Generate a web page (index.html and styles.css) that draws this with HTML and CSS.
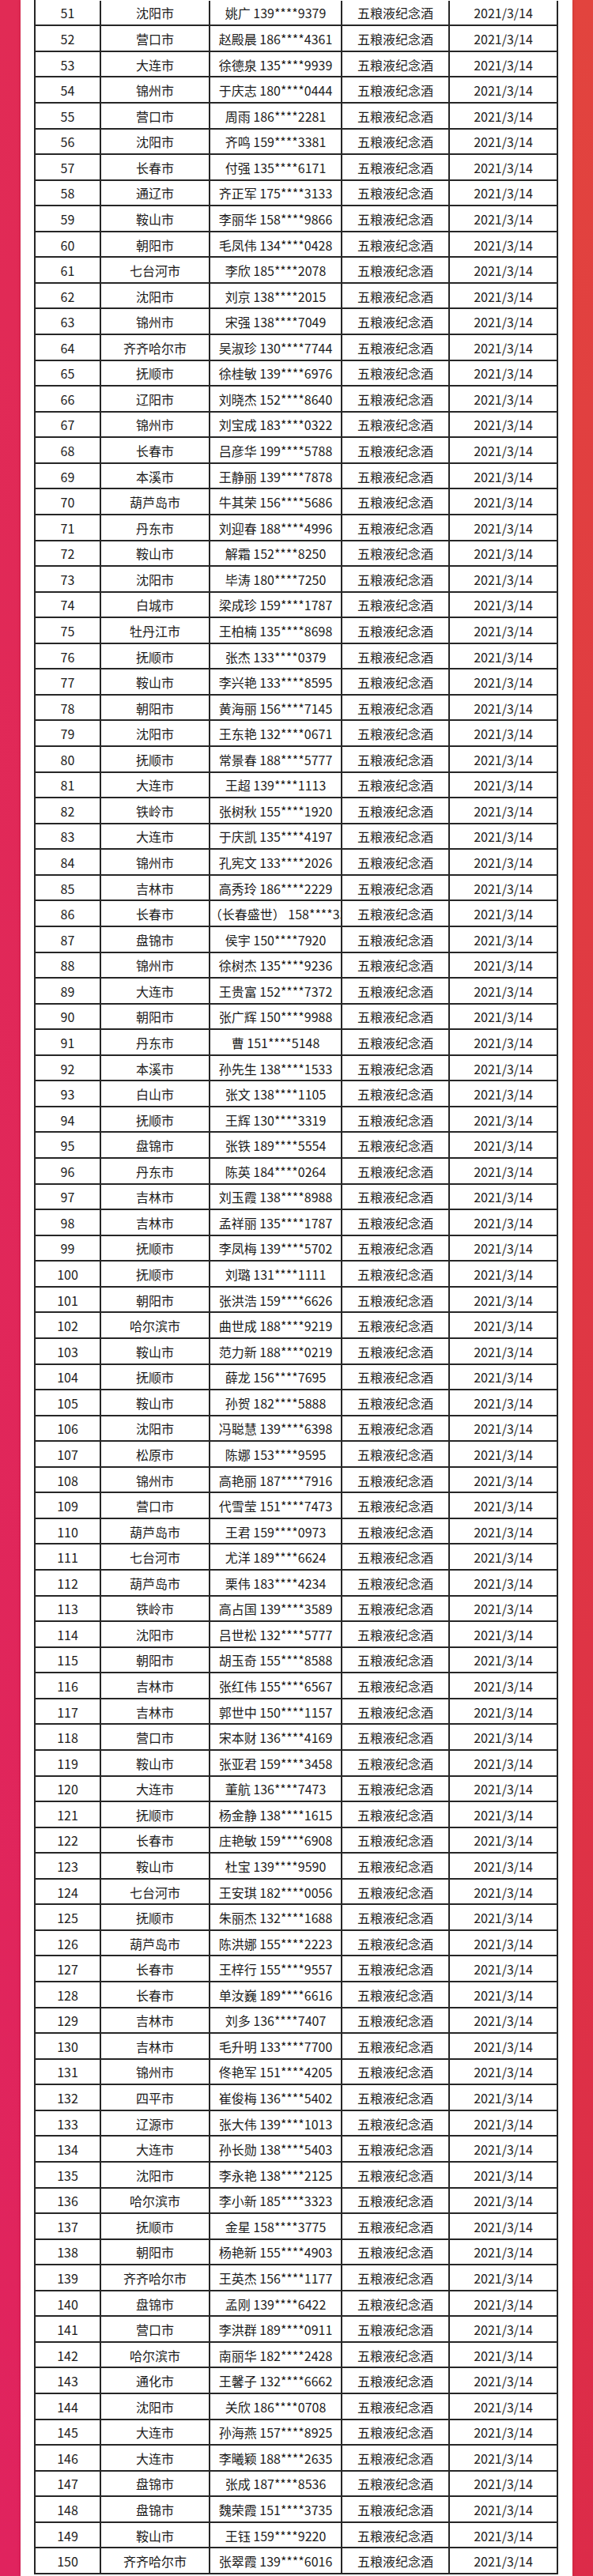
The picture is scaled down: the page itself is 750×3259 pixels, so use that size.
FILE: index.html
```html
<!DOCTYPE html>
<html lang="zh-CN">
<head>
<meta charset="utf-8">
<title>五粮液纪念酒 中奖名单</title>
<link rel="stylesheet" href="styles.css">
</head>
<body>
<div class="panel">
<div class="sheet">
<div class="row"><div class="c no">51</div><div class="c">沈阳市</div><div class="c">姚广 139****9379</div><div class="c">五粮液纪念酒</div><div class="c">2021/3/14</div></div>
<div class="row"><div class="c no">52</div><div class="c">营口市</div><div class="c">赵殿晨 186****4361</div><div class="c">五粮液纪念酒</div><div class="c">2021/3/14</div></div>
<div class="row"><div class="c no">53</div><div class="c">大连市</div><div class="c">徐德泉 135****9939</div><div class="c">五粮液纪念酒</div><div class="c">2021/3/14</div></div>
<div class="row"><div class="c no">54</div><div class="c">锦州市</div><div class="c">于庆志 180****0444</div><div class="c">五粮液纪念酒</div><div class="c">2021/3/14</div></div>
<div class="row"><div class="c no">55</div><div class="c">营口市</div><div class="c">周雨 186****2281</div><div class="c">五粮液纪念酒</div><div class="c">2021/3/14</div></div>
<div class="row"><div class="c no">56</div><div class="c">沈阳市</div><div class="c">齐鸣 159****3381</div><div class="c">五粮液纪念酒</div><div class="c">2021/3/14</div></div>
<div class="row"><div class="c no">57</div><div class="c">长春市</div><div class="c">付强 135****6171</div><div class="c">五粮液纪念酒</div><div class="c">2021/3/14</div></div>
<div class="row"><div class="c no">58</div><div class="c">通辽市</div><div class="c">齐正军 175****3133</div><div class="c">五粮液纪念酒</div><div class="c">2021/3/14</div></div>
<div class="row"><div class="c no">59</div><div class="c">鞍山市</div><div class="c">李丽华 158****9866</div><div class="c">五粮液纪念酒</div><div class="c">2021/3/14</div></div>
<div class="row"><div class="c no">60</div><div class="c">朝阳市</div><div class="c">毛凤伟 134****0428</div><div class="c">五粮液纪念酒</div><div class="c">2021/3/14</div></div>
<div class="row"><div class="c no">61</div><div class="c">七台河市</div><div class="c">李欣 185****2078</div><div class="c">五粮液纪念酒</div><div class="c">2021/3/14</div></div>
<div class="row"><div class="c no">62</div><div class="c">沈阳市</div><div class="c">刘京 138****2015</div><div class="c">五粮液纪念酒</div><div class="c">2021/3/14</div></div>
<div class="row"><div class="c no">63</div><div class="c">锦州市</div><div class="c">宋强 138****7049</div><div class="c">五粮液纪念酒</div><div class="c">2021/3/14</div></div>
<div class="row"><div class="c no">64</div><div class="c">齐齐哈尔市</div><div class="c">吴淑珍 130****7744</div><div class="c">五粮液纪念酒</div><div class="c">2021/3/14</div></div>
<div class="row"><div class="c no">65</div><div class="c">抚顺市</div><div class="c">徐桂敏 139****6976</div><div class="c">五粮液纪念酒</div><div class="c">2021/3/14</div></div>
<div class="row"><div class="c no">66</div><div class="c">辽阳市</div><div class="c">刘晓杰 152****8640</div><div class="c">五粮液纪念酒</div><div class="c">2021/3/14</div></div>
<div class="row"><div class="c no">67</div><div class="c">锦州市</div><div class="c">刘宝成 183****0322</div><div class="c">五粮液纪念酒</div><div class="c">2021/3/14</div></div>
<div class="row"><div class="c no">68</div><div class="c">长春市</div><div class="c">吕彦华 199****5788</div><div class="c">五粮液纪念酒</div><div class="c">2021/3/14</div></div>
<div class="row"><div class="c no">69</div><div class="c">本溪市</div><div class="c">王静丽 139****7878</div><div class="c">五粮液纪念酒</div><div class="c">2021/3/14</div></div>
<div class="row"><div class="c no">70</div><div class="c">葫芦岛市</div><div class="c">牛其荣 156****5686</div><div class="c">五粮液纪念酒</div><div class="c">2021/3/14</div></div>
<div class="row"><div class="c no">71</div><div class="c">丹东市</div><div class="c">刘迎春 188****4996</div><div class="c">五粮液纪念酒</div><div class="c">2021/3/14</div></div>
<div class="row"><div class="c no">72</div><div class="c">鞍山市</div><div class="c">解霜 152****8250</div><div class="c">五粮液纪念酒</div><div class="c">2021/3/14</div></div>
<div class="row"><div class="c no">73</div><div class="c">沈阳市</div><div class="c">毕涛 180****7250</div><div class="c">五粮液纪念酒</div><div class="c">2021/3/14</div></div>
<div class="row"><div class="c no">74</div><div class="c">白城市</div><div class="c">梁成珍 159****1787</div><div class="c">五粮液纪念酒</div><div class="c">2021/3/14</div></div>
<div class="row"><div class="c no">75</div><div class="c">牡丹江市</div><div class="c">王柏楠 135****8698</div><div class="c">五粮液纪念酒</div><div class="c">2021/3/14</div></div>
<div class="row"><div class="c no">76</div><div class="c">抚顺市</div><div class="c">张杰 133****0379</div><div class="c">五粮液纪念酒</div><div class="c">2021/3/14</div></div>
<div class="row"><div class="c no">77</div><div class="c">鞍山市</div><div class="c">李兴艳 133****8595</div><div class="c">五粮液纪念酒</div><div class="c">2021/3/14</div></div>
<div class="row"><div class="c no">78</div><div class="c">朝阳市</div><div class="c">黄海丽 156****7145</div><div class="c">五粮液纪念酒</div><div class="c">2021/3/14</div></div>
<div class="row"><div class="c no">79</div><div class="c">沈阳市</div><div class="c">王东艳 132****0671</div><div class="c">五粮液纪念酒</div><div class="c">2021/3/14</div></div>
<div class="row"><div class="c no">80</div><div class="c">抚顺市</div><div class="c">常景春 188****5777</div><div class="c">五粮液纪念酒</div><div class="c">2021/3/14</div></div>
<div class="row"><div class="c no">81</div><div class="c">大连市</div><div class="c">王超 139****1113</div><div class="c">五粮液纪念酒</div><div class="c">2021/3/14</div></div>
<div class="row"><div class="c no">82</div><div class="c">铁岭市</div><div class="c">张树秋 155****1920</div><div class="c">五粮液纪念酒</div><div class="c">2021/3/14</div></div>
<div class="row"><div class="c no">83</div><div class="c">大连市</div><div class="c">于庆凯 135****4197</div><div class="c">五粮液纪念酒</div><div class="c">2021/3/14</div></div>
<div class="row"><div class="c no">84</div><div class="c">锦州市</div><div class="c">孔宪文 133****2026</div><div class="c">五粮液纪念酒</div><div class="c">2021/3/14</div></div>
<div class="row"><div class="c no">85</div><div class="c">吉林市</div><div class="c">高秀玲 186****2229</div><div class="c">五粮液纪念酒</div><div class="c">2021/3/14</div></div>
<div class="row"><div class="c no">86</div><div class="c">长春市</div><div class="c"><span class="clip">王李（长春盛世） 158****3326</span></div><div class="c">五粮液纪念酒</div><div class="c">2021/3/14</div></div>
<div class="row"><div class="c no">87</div><div class="c">盘锦市</div><div class="c">侯宇 150****7920</div><div class="c">五粮液纪念酒</div><div class="c">2021/3/14</div></div>
<div class="row"><div class="c no">88</div><div class="c">锦州市</div><div class="c">徐树杰 135****9236</div><div class="c">五粮液纪念酒</div><div class="c">2021/3/14</div></div>
<div class="row"><div class="c no">89</div><div class="c">大连市</div><div class="c">王贵富 152****7372</div><div class="c">五粮液纪念酒</div><div class="c">2021/3/14</div></div>
<div class="row"><div class="c no">90</div><div class="c">朝阳市</div><div class="c">张广辉 150****9988</div><div class="c">五粮液纪念酒</div><div class="c">2021/3/14</div></div>
<div class="row"><div class="c no">91</div><div class="c">丹东市</div><div class="c">曹 151****5148</div><div class="c">五粮液纪念酒</div><div class="c">2021/3/14</div></div>
<div class="row"><div class="c no">92</div><div class="c">本溪市</div><div class="c">孙先生 138****1533</div><div class="c">五粮液纪念酒</div><div class="c">2021/3/14</div></div>
<div class="row"><div class="c no">93</div><div class="c">白山市</div><div class="c">张文 138****1105</div><div class="c">五粮液纪念酒</div><div class="c">2021/3/14</div></div>
<div class="row"><div class="c no">94</div><div class="c">抚顺市</div><div class="c">王辉 130****3319</div><div class="c">五粮液纪念酒</div><div class="c">2021/3/14</div></div>
<div class="row"><div class="c no">95</div><div class="c">盘锦市</div><div class="c">张铁 189****5554</div><div class="c">五粮液纪念酒</div><div class="c">2021/3/14</div></div>
<div class="row"><div class="c no">96</div><div class="c">丹东市</div><div class="c">陈英 184****0264</div><div class="c">五粮液纪念酒</div><div class="c">2021/3/14</div></div>
<div class="row"><div class="c no">97</div><div class="c">吉林市</div><div class="c">刘玉霞 138****8988</div><div class="c">五粮液纪念酒</div><div class="c">2021/3/14</div></div>
<div class="row"><div class="c no">98</div><div class="c">吉林市</div><div class="c">孟祥丽 135****1787</div><div class="c">五粮液纪念酒</div><div class="c">2021/3/14</div></div>
<div class="row"><div class="c no">99</div><div class="c">抚顺市</div><div class="c">李凤梅 139****5702</div><div class="c">五粮液纪念酒</div><div class="c">2021/3/14</div></div>
<div class="row"><div class="c no">100</div><div class="c">抚顺市</div><div class="c">刘璐 131****1111</div><div class="c">五粮液纪念酒</div><div class="c">2021/3/14</div></div>
<div class="row"><div class="c no">101</div><div class="c">朝阳市</div><div class="c">张洪浩 159****6626</div><div class="c">五粮液纪念酒</div><div class="c">2021/3/14</div></div>
<div class="row"><div class="c no">102</div><div class="c">哈尔滨市</div><div class="c">曲世成 188****9219</div><div class="c">五粮液纪念酒</div><div class="c">2021/3/14</div></div>
<div class="row"><div class="c no">103</div><div class="c">鞍山市</div><div class="c">范力新 188****0219</div><div class="c">五粮液纪念酒</div><div class="c">2021/3/14</div></div>
<div class="row"><div class="c no">104</div><div class="c">抚顺市</div><div class="c">薛龙 156****7695</div><div class="c">五粮液纪念酒</div><div class="c">2021/3/14</div></div>
<div class="row"><div class="c no">105</div><div class="c">鞍山市</div><div class="c">孙贺 182****5888</div><div class="c">五粮液纪念酒</div><div class="c">2021/3/14</div></div>
<div class="row"><div class="c no">106</div><div class="c">沈阳市</div><div class="c">冯聪慧 139****6398</div><div class="c">五粮液纪念酒</div><div class="c">2021/3/14</div></div>
<div class="row"><div class="c no">107</div><div class="c">松原市</div><div class="c">陈娜 153****9595</div><div class="c">五粮液纪念酒</div><div class="c">2021/3/14</div></div>
<div class="row"><div class="c no">108</div><div class="c">锦州市</div><div class="c">高艳丽 187****7916</div><div class="c">五粮液纪念酒</div><div class="c">2021/3/14</div></div>
<div class="row"><div class="c no">109</div><div class="c">营口市</div><div class="c">代雪莹 151****7473</div><div class="c">五粮液纪念酒</div><div class="c">2021/3/14</div></div>
<div class="row"><div class="c no">110</div><div class="c">葫芦岛市</div><div class="c">王君 159****0973</div><div class="c">五粮液纪念酒</div><div class="c">2021/3/14</div></div>
<div class="row"><div class="c no">111</div><div class="c">七台河市</div><div class="c">尤洋 189****6624</div><div class="c">五粮液纪念酒</div><div class="c">2021/3/14</div></div>
<div class="row"><div class="c no">112</div><div class="c">葫芦岛市</div><div class="c">栗伟 183****4234</div><div class="c">五粮液纪念酒</div><div class="c">2021/3/14</div></div>
<div class="row"><div class="c no">113</div><div class="c">铁岭市</div><div class="c">高占国 139****3589</div><div class="c">五粮液纪念酒</div><div class="c">2021/3/14</div></div>
<div class="row"><div class="c no">114</div><div class="c">沈阳市</div><div class="c">吕世松 132****5777</div><div class="c">五粮液纪念酒</div><div class="c">2021/3/14</div></div>
<div class="row"><div class="c no">115</div><div class="c">朝阳市</div><div class="c">胡玉奇 155****8588</div><div class="c">五粮液纪念酒</div><div class="c">2021/3/14</div></div>
<div class="row"><div class="c no">116</div><div class="c">吉林市</div><div class="c">张红伟 155****6567</div><div class="c">五粮液纪念酒</div><div class="c">2021/3/14</div></div>
<div class="row"><div class="c no">117</div><div class="c">吉林市</div><div class="c">郭世中 150****1157</div><div class="c">五粮液纪念酒</div><div class="c">2021/3/14</div></div>
<div class="row"><div class="c no">118</div><div class="c">营口市</div><div class="c">宋本财 136****4169</div><div class="c">五粮液纪念酒</div><div class="c">2021/3/14</div></div>
<div class="row"><div class="c no">119</div><div class="c">鞍山市</div><div class="c">张亚君 159****3458</div><div class="c">五粮液纪念酒</div><div class="c">2021/3/14</div></div>
<div class="row"><div class="c no">120</div><div class="c">大连市</div><div class="c">董航 136****7473</div><div class="c">五粮液纪念酒</div><div class="c">2021/3/14</div></div>
<div class="row"><div class="c no">121</div><div class="c">抚顺市</div><div class="c">杨金静 138****1615</div><div class="c">五粮液纪念酒</div><div class="c">2021/3/14</div></div>
<div class="row"><div class="c no">122</div><div class="c">长春市</div><div class="c">庄艳敏 159****6908</div><div class="c">五粮液纪念酒</div><div class="c">2021/3/14</div></div>
<div class="row"><div class="c no">123</div><div class="c">鞍山市</div><div class="c">杜宝 139****9590</div><div class="c">五粮液纪念酒</div><div class="c">2021/3/14</div></div>
<div class="row"><div class="c no">124</div><div class="c">七台河市</div><div class="c">王安琪 182****0056</div><div class="c">五粮液纪念酒</div><div class="c">2021/3/14</div></div>
<div class="row"><div class="c no">125</div><div class="c">抚顺市</div><div class="c">朱丽杰 132****1688</div><div class="c">五粮液纪念酒</div><div class="c">2021/3/14</div></div>
<div class="row"><div class="c no">126</div><div class="c">葫芦岛市</div><div class="c">陈洪娜 155****2223</div><div class="c">五粮液纪念酒</div><div class="c">2021/3/14</div></div>
<div class="row"><div class="c no">127</div><div class="c">长春市</div><div class="c">王梓行 155****9557</div><div class="c">五粮液纪念酒</div><div class="c">2021/3/14</div></div>
<div class="row"><div class="c no">128</div><div class="c">长春市</div><div class="c">单汝巍 189****6616</div><div class="c">五粮液纪念酒</div><div class="c">2021/3/14</div></div>
<div class="row"><div class="c no">129</div><div class="c">吉林市</div><div class="c">刘多 136****7407</div><div class="c">五粮液纪念酒</div><div class="c">2021/3/14</div></div>
<div class="row"><div class="c no">130</div><div class="c">吉林市</div><div class="c">毛升明 133****7700</div><div class="c">五粮液纪念酒</div><div class="c">2021/3/14</div></div>
<div class="row"><div class="c no">131</div><div class="c">锦州市</div><div class="c">佟艳军 151****4205</div><div class="c">五粮液纪念酒</div><div class="c">2021/3/14</div></div>
<div class="row"><div class="c no">132</div><div class="c">四平市</div><div class="c">崔俊梅 136****5402</div><div class="c">五粮液纪念酒</div><div class="c">2021/3/14</div></div>
<div class="row"><div class="c no">133</div><div class="c">辽源市</div><div class="c">张大伟 139****1013</div><div class="c">五粮液纪念酒</div><div class="c">2021/3/14</div></div>
<div class="row"><div class="c no">134</div><div class="c">大连市</div><div class="c">孙长勋 138****5403</div><div class="c">五粮液纪念酒</div><div class="c">2021/3/14</div></div>
<div class="row"><div class="c no">135</div><div class="c">沈阳市</div><div class="c">李永艳 138****2125</div><div class="c">五粮液纪念酒</div><div class="c">2021/3/14</div></div>
<div class="row"><div class="c no">136</div><div class="c">哈尔滨市</div><div class="c">李小新 185****3323</div><div class="c">五粮液纪念酒</div><div class="c">2021/3/14</div></div>
<div class="row"><div class="c no">137</div><div class="c">抚顺市</div><div class="c">金星 158****3775</div><div class="c">五粮液纪念酒</div><div class="c">2021/3/14</div></div>
<div class="row"><div class="c no">138</div><div class="c">朝阳市</div><div class="c">杨艳新 155****4903</div><div class="c">五粮液纪念酒</div><div class="c">2021/3/14</div></div>
<div class="row"><div class="c no">139</div><div class="c">齐齐哈尔市</div><div class="c">王英杰 156****1177</div><div class="c">五粮液纪念酒</div><div class="c">2021/3/14</div></div>
<div class="row"><div class="c no">140</div><div class="c">盘锦市</div><div class="c">孟刚 139****6422</div><div class="c">五粮液纪念酒</div><div class="c">2021/3/14</div></div>
<div class="row"><div class="c no">141</div><div class="c">营口市</div><div class="c">李洪群 189****0911</div><div class="c">五粮液纪念酒</div><div class="c">2021/3/14</div></div>
<div class="row"><div class="c no">142</div><div class="c">哈尔滨市</div><div class="c">南丽华 182****2428</div><div class="c">五粮液纪念酒</div><div class="c">2021/3/14</div></div>
<div class="row"><div class="c no">143</div><div class="c">通化市</div><div class="c">王馨子 132****6662</div><div class="c">五粮液纪念酒</div><div class="c">2021/3/14</div></div>
<div class="row"><div class="c no">144</div><div class="c">沈阳市</div><div class="c">关欣 186****0708</div><div class="c">五粮液纪念酒</div><div class="c">2021/3/14</div></div>
<div class="row"><div class="c no">145</div><div class="c">大连市</div><div class="c">孙海燕 157****8925</div><div class="c">五粮液纪念酒</div><div class="c">2021/3/14</div></div>
<div class="row"><div class="c no">146</div><div class="c">大连市</div><div class="c">李曦颖 188****2635</div><div class="c">五粮液纪念酒</div><div class="c">2021/3/14</div></div>
<div class="row"><div class="c no">147</div><div class="c">盘锦市</div><div class="c">张成 187****8536</div><div class="c">五粮液纪念酒</div><div class="c">2021/3/14</div></div>
<div class="row"><div class="c no">148</div><div class="c">盘锦市</div><div class="c">魏荣霞 151****3735</div><div class="c">五粮液纪念酒</div><div class="c">2021/3/14</div></div>
<div class="row"><div class="c no">149</div><div class="c">鞍山市</div><div class="c">王钰 159****9220</div><div class="c">五粮液纪念酒</div><div class="c">2021/3/14</div></div>
<div class="row"><div class="c no">150</div><div class="c">齐齐哈尔市</div><div class="c">张翠霞 139****6016</div><div class="c">五粮液纪念酒</div><div class="c">2021/3/14</div></div>
</div>
</div>
</body>
</html>
```

FILE: styles.css
```css
html, body {
  margin: 0;
  padding: 0;
}

body {
  width: 750px;
  height: 3259px;
  overflow: hidden;
  background:
    linear-gradient(#e12b55, #e0235e) left top / 26px 100% no-repeat,
    linear-gradient(#e2443e, #dc2b49) right top / 26px 100% no-repeat,
    #e03048;
  font-family: "Noto Sans CJK SC", "Noto Sans", sans-serif;
  color: #1c1c1c;
}

.panel {
  margin: 0 26px;
  height: 3259px;
  background: #fff;
  box-shadow: 0 0 3px rgba(120, 0, 20, 0.35);
  padding: 0 18px 0 17px;
  box-sizing: border-box;
}

.sheet {
  width: 663px;
  border-left: 2px solid #262626;
  box-sizing: border-box;
  padding-top: 0.7px;
}

.row {
  display: grid;
  grid-template-columns: 83px 138px 167px 136px 137px;
  height: 32.57px;
}

.c {
  display: flex;
  align-items: center;
  justify-content: center;
  border-right: 2px solid #262626;
  border-bottom: 2px solid #262626;
  font-size: 16px;
  line-height: 1;
  white-space: nowrap;
  overflow: hidden;
  padding-top: 1px;
}

.no {
  font-size: 16px;
}

.clip {
  flex: none;
  padding-right: 8px;
}
```
